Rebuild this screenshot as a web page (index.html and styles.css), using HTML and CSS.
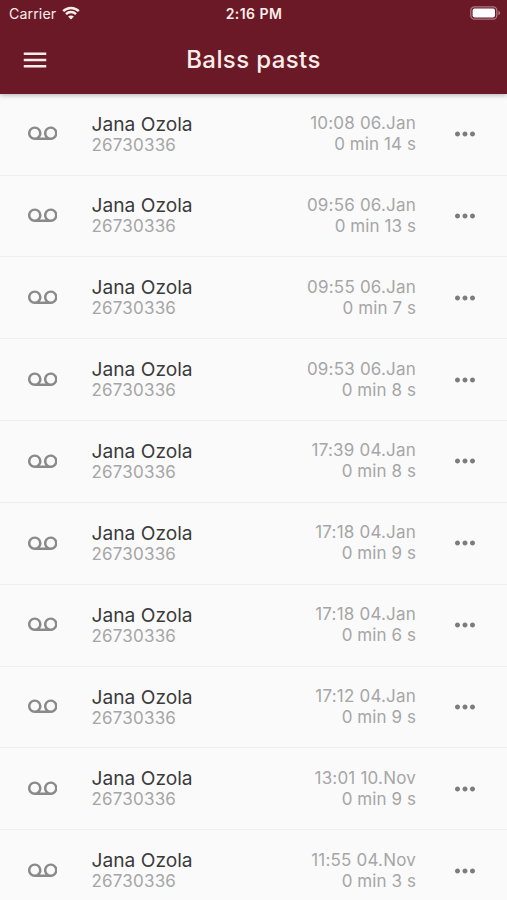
FILE: index.html
```html
<!DOCTYPE html>
<html lang="lv">
<head>
    <meta charset="UTF-8">
    <meta name="viewport" content="width=device-width, initial-scale=1.0">
    <title>Balss pasts</title>
    <link rel="stylesheet" href="styles.css">
</head>
<body>
    <!-- Header -->
    <header class="header">
        <div class="status-bar">
            <div class="carrier">
                <span>Carrier</span>
                <svg class="wifi" viewBox="0 0 18 14">
                    <path d="M1.2 5.2C5.6 .9 12.4 .9 16.8 5.2M4 8.1c2.8-2.7 7.2-2.7 10 0" fill="none" stroke="currentColor" stroke-width="2.5"/>
                    <path d="M9 13.6l-2.9-3c1.6-1.4 4.2-1.4 5.8 0z" fill="currentColor"/>
                </svg>
            </div>
            <div class="time">2:16 PM</div>
            <svg class="battery" viewBox="0 0 31 14">
                <rect x=".8" y=".8" width="26" height="12.4" rx="3.6" fill="none" stroke="#fff" stroke-opacity=".42" stroke-width="1.3"/>
                <rect x="2.6" y="2.6" width="22.4" height="8.8" rx="1.8" fill="#fff"/>
                <path d="M28.4 4.8c2.2.7 2.2 3.7 0 4.4z" fill="#fff" fill-opacity=".45"/>
            </svg>
        </div>
        <div class="toolbar">
            <svg class="menu-icon" viewBox="0 0 24 24"><path d="M3 18h18v-2H3v2zm0-5h18v-2H3v2zm0-7v2h18V6H3z"/></svg>
            <h1 class="title">Balss pasts</h1>
        </div>
    </header>

    <ul class="messages" id="messages"></ul>

    <script src="script.js"></script>
</body>
</html>
```
FILE: styles.css
```css
body {
    margin: 0;
    height: 900px;
    overflow: hidden;
    background: #fafafa;
    font-family: Inter, "Liberation Sans", sans-serif;
}

.header {
    position: relative;
    height: 93.5px;
    background: #6b1926;
    color: #fbeeea;
    box-shadow: 0 1px 5px rgba(0, 0, 0, 0.3);
}

.status-bar {
    display: grid;
    grid-template-columns: 1fr auto 1fr;
    align-items: center;
    height: 27px;
    padding: 0 8px 0 9px;
}

.carrier {
    display: flex;
    align-items: center;
    gap: 6px;
    font-size: 14.2px;
    letter-spacing: 0.1px;
}

.wifi {
    width: 18px;
    height: 14px;
    margin-bottom: 1px;
}

.time {
    font-size: 14px;
    font-weight: 600;
    letter-spacing: 0.45px;
}

.battery {
    justify-self: end;
    width: 31px;
    height: 14px;
    margin: 0 -2px 1px 0;
}

.toolbar {
    display: grid;
    grid-template-columns: 50px 1fr 50px;
    align-items: center;
    height: 65px;
}

.menu-icon {
    width: 30px;
    height: 30px;
    margin-left: 20px;
    fill: currentColor;
}

.title {
    margin: 0;
    text-align: center;
    font-size: 24px;
    font-weight: 500;
    letter-spacing: 0.4px;
}

.messages {
    list-style: none;
    margin: 0;
    padding: 0.2px 0 0;
}

.message {
    display: flex;
    align-items: center;
    box-sizing: border-box;
    height: 81.85px;
    padding: 0 26.5px 0 27.5px;
    border-bottom: 1px solid #eeeeee;
}

.voicemail-icon {
    width: 29.5px;
    height: 29.5px;
    margin-right: 34.5px;
    fill: #8a8a8a;
}

.caller {
    flex: 1;
}

.name {
    color: #3b3b3b;
    font-size: 19.2px;
    line-height: 22px;
}

.number,
.details {
    color: #a6a6a6;
    font-size: 17px;
    letter-spacing: 0.2px;
    line-height: 21px;
}

.details {
    text-align: right;
}

.length {
    letter-spacing: 0.08px;
}

.more-icon {
    width: 30px;
    height: 30px;
    margin-left: 34px;
    margin-right: 0.5px;
    fill: #7c7c7c;
}
```
FILE: script.js
```js
const messages = [
    ['10:08 06.Jan', '0 min 14 s'],
    ['09:56 06.Jan', '0 min 13 s'],
    ['09:55 06.Jan', '0 min 7 s'],
    ['09:53 06.Jan', '0 min 8 s'],
    ['17:39 04.Jan', '0 min 8 s'],
    ['17:18 04.Jan', '0 min 9 s'],
    ['17:18 04.Jan', '0 min 6 s'],
    ['17:12 04.Jan', '0 min 9 s'],
    ['13:01 10.Nov', '0 min 9 s'],
    ['11:55 04.Nov', '0 min 3 s']
];

document.getElementById('messages').innerHTML = messages.map(([date, length]) => `
    <li class="message">
        <svg class="voicemail-icon" viewBox="0 0 24 24"><path d="M18.5 6C15.46 6 13 8.46 13 11.5c0 1.33.47 2.55 1.26 3.5H9.74c.79-.95 1.26-2.17 1.26-3.5C11 8.46 8.54 6 5.5 6S0 8.46 0 11.5 2.46 17 5.5 17h13c3.04 0 5.5-2.46 5.5-5.5S21.54 6 18.5 6zm-13 9C3.57 15 2 13.43 2 11.5S3.57 8 5.5 8 9 9.57 9 11.5 7.43 15 5.5 15zm13 0c-1.93 0-3.5-1.57-3.5-3.5S16.57 8 18.5 8 22 9.57 22 11.5 20.43 15 18.5 15z"/></svg>
        <div class="caller">
            <div class="name">Jana Ozola</div>
            <div class="number">26730336</div>
        </div>
        <div class="details">
            <div>${date}</div>
            <div class="length">${length}</div>
        </div>
        <svg class="more-icon" viewBox="0 0 24 24"><path d="M6 10c-1.1 0-2 .9-2 2s.9 2 2 2 2-.9 2-2-.9-2-2-2zm12 0c-1.1 0-2 .9-2 2s.9 2 2 2 2-.9 2-2-.9-2-2-2zm-6 0c-1.1 0-2 .9-2 2s.9 2 2 2 2-.9 2-2-.9-2-2-2z"/></svg>
    </li>
`).join('');
```
